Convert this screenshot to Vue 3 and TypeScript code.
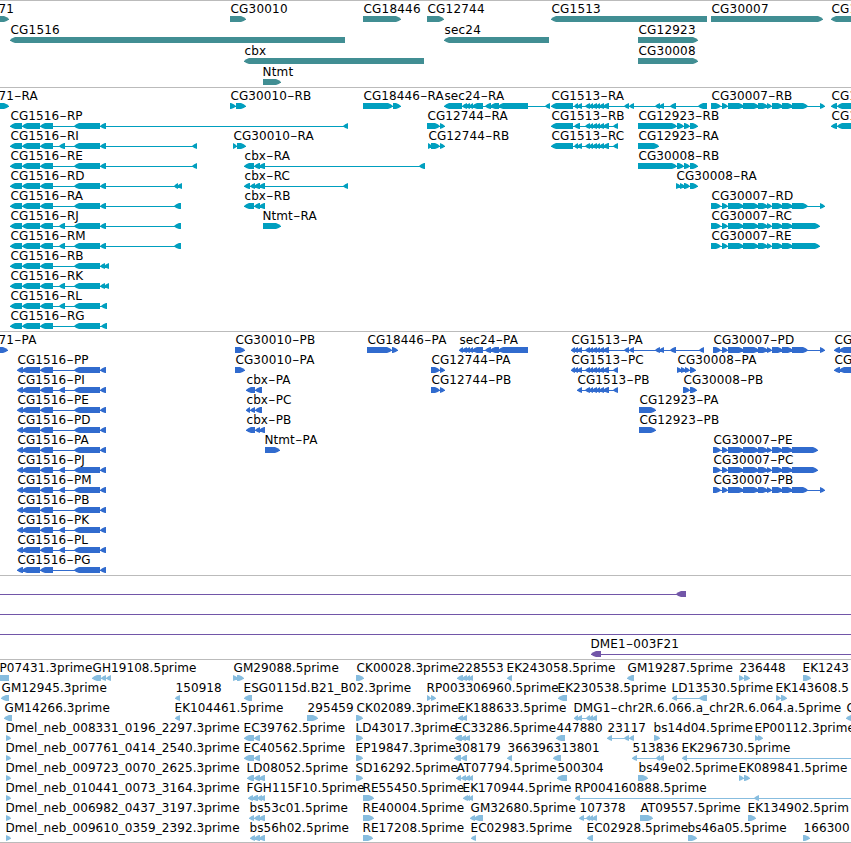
<template>
  <main class="browser">
    <section
      v-for="track in tracks"
      :key="track.name"
      class="track"
      :class="track.name"
    >
      <svg width="851" :height="track.height" :aria-label="track.name">
        <g
          v-for="(row, r) in track.rows"
          :key="r"
          :transform="`translate(0 ${r * track.pitch})`"
        >
          <g v-for="(f, i) in row" :key="i">
            <rect
              class="intron"
              :x="f.exons[0][0]"
              y="18"
              :width="(f.lineEnd ?? f.exons[f.exons.length - 1][1]) - f.exons[0][0]"
              height="1"
            />
            <path :d="exonPath(f)" />
            <text v-if="f.label" :x="f.x + 0.5" y="12">
              <template v-for="(part, p) in f.label.split('-')" :key="p"
                ><tspan v-if="p > 0" class="dash" dy="1.8">-</tspan
                ><tspan :dy="p > 0 ? -1.8 : 0">{{ part }}</tspan></template
              >
            </text>
          </g>
        </g>
      </svg>
    </section>
  </main>
</template>

<script setup lang="ts">
type Span = [number, number];
type Strand = "+" | "-" | "";

interface Feature {
  label: string;
  x: number;
  strand: Strand;
  exons: Span[];
  lineEnd?: number;
}

interface Track {
  name: string;
  height: number;
  pitch: number;
  rows: Feature[][];
}

function feat(
  label: string,
  x: number,
  strand: Strand,
  exons: Span[],
  lineEnd?: number
): Feature {
  return { label, x, strand, exons, lineEnd };
}

// each exon is a 6px bar that narrows to a rounded point on the strand side
function exonPath(f: Feature) {
  if (!f.strand) return "";
  return f.exons
    .map(([a, b]) => {
      const head = Math.min(5, b - a);
      const dir = f.strand === "+" ? 1 : -1;
      const tip = dir > 0 ? b : a;
      const base = dir > 0 ? a : b;
      const neck = tip - dir * head;
      const mid = tip - dir * head * 0.45;
      return `M${base} 15H${neck}L${mid} 16.2L${tip} 17.9V18.6L${mid} 20L${neck} 21H${base}Z`;
    })
    .join("");
}

const cg1513: Span[] = [
  [585, 590], [589, 593], [592, 597], [596, 600], [599, 604], [603, 609],
];
const cg1513Far: Span[] = [[624, 629], [629, 634], [655, 660], [659, 664], [670, 676]];
const sec24: Span[] = [[465, 470], [469, 473], [472, 483], [485, 491], [490, 499], [498, 528]];
const cg30007: Span[] = [
  [722, 728], [728, 744], [743, 759], [758, 768], [767, 772], [772, 783], [782, 793],
];
const cg30008: Span[] = [[638, 677], [677, 684], [684, 690], [690, 698]];

function cg1516(name: string, extra: boolean, tail: Span[]) {
  const exons: Span[] = [[10, 22], [22, 40], [40, 53]];
  if (extra) exons.push([59, 65]);
  exons.push([74, 100], ...tail);
  return feat(`CG1516-${name}`, 10, "-", exons);
}

function cg1516p(name: string, extra = false) {
  const exons: Span[] = [[17, 23], [22, 40], [40, 53]];
  if (extra) exons.push([59, 65]);
  exons.push([74, 100], [100, 106]);
  return feat(`CG1516-${name}`, 17, "-", exons);
}

function neb(id: string) {
  return feat(`Dmel_neb_${id}.3prime`, 5, "+", [[6, 11]]);
}

const tracks: Track[] = [
  {
    name: "genes",
    height: 86,
    pitch: 21,
    rows: [
      [
        feat("71", -2, "+", [[-10, 9]]),
        feat("CG30010", 230, "+", [[230, 246]]),
        feat("CG18446", 363, "+", [[363, 401]]),
        feat("CG12744", 427, "+", [[427, 444]]),
        feat("CG1513", 551, "-", [[551, 707]]),
        feat("CG30007", 711, "+", [[711, 823]]),
        feat("CG1", 831, "-", [[831, 860]]),
      ],
      [
        feat("CG1516", 10, "-", [[10, 345]]),
        feat("sec24", 444, "-", [[444, 549]]),
        feat("CG12923", 638, "+", [[638, 698]]),
      ],
      [
        feat("cbx", 244, "-", [[244, 424]]),
        feat("CG30008", 638, "+", [[638, 698]]),
      ],
      [feat("Ntmt", 262, "+", [[263, 281]])],
    ],
  },
  {
    name: "transcripts",
    height: 243,
    pitch: 20,
    rows: [
      [
        feat("71-RA", -2, "+", [[-10, 9]]),
        feat("CG30010-RB", 230, "+", [[230, 236], [236, 246]]),
        feat("CG18446-RA", 363, "+", [[363, 393], [393, 401]]),
        feat("sec24-RA", 444, "-", [[444, 462], [462, 467], ...sec24, [545, 550]]),
        feat("CG1513-RA", 551, "-", [[551, 573], [574, 578], [577, 582], ...cg1513, ...cg1513Far, [698, 707]]),
        feat("CG30007-RB", 711, "+", [[711, 721], ...cg30007, [792, 808], [820, 825]]),
        feat("CG1", 831, "-", [[831, 837], [837, 860]]),
      ],
      [
        cg1516("RP", false, [[100, 106], [343, 348]]),
        feat("CG12744-RA", 427, "+", [[427, 440], [440, 445]]),
        feat("CG1513-RB", 551, "-", [[551, 573], [574, 580], ...cg1513, [613, 618]]),
        feat("CG12923-RB", 638, "+", cg30008),
        feat("CG1", 831, "-", [[831, 837], [837, 860]]),
      ],
      [
        cg1516("RI", true, [[100, 106], [192, 197]]),
        feat("CG30010-RA", 233, "+", [[233, 237], [237, 246]]),
        feat("CG12744-RB", 428, "+", [[428, 432], [431, 440], [440, 445]]),
        feat("CG1513-RC", 551, "-", [[551, 573], [574, 578], [577, 582], ...cg1513, [613, 618]]),
        feat("CG12923-RA", 638, "+", [[638, 659]]),
      ],
      [
        cg1516("RE", false, [[100, 106], [192, 197]]),
        feat("cbx-RA", 244, "-", [[244, 254], [254, 260], [259, 265], [419, 425]]),
        feat("CG30008-RB", 638, "+", cg30008),
      ],
      [
        cg1516("RD", false, [[100, 106], [174, 178], [177, 182]]),
        feat("cbx-RC", 244, "-", [[244, 250], [250, 255], [254, 260], [259, 265], [343, 348]]),
        feat("CG30008-RA", 676, "+", [[676, 681], [680, 685], [684, 690], [690, 698]]),
      ],
      [
        cg1516("RA", false, [[100, 106], [174, 181]]),
        feat("cbx-RB", 244, "-", [[244, 254], [254, 260], [259, 265]]),
        feat("CG30007-RD", 711, "+", [[711, 721], ...cg30007, [792, 808], [820, 825]]),
      ],
      [
        cg1516("RJ", true, [[100, 106], [174, 181]]),
        feat("Ntmt-RA", 262, "+", [[263, 281]]),
        feat("CG30007-RC", 711, "+", [[711, 721], ...cg30007, [792, 820]]),
      ],
      [
        cg1516("RM", true, [[100, 106], [174, 181]]),
        feat("CG30007-RE", 711, "+", [[711, 721], ...cg30007, [792, 820]]),
      ],
      [cg1516("RB", false, [[100, 105], [104, 109]])],
      [cg1516("RK", true, [[100, 105], [104, 109]])],
      [cg1516("RL", true, [[101, 107]])],
      [cg1516("RG", false, [[101, 107]])],
    ],
  },
  {
    name: "proteins",
    height: 243,
    pitch: 20,
    rows: [
      [
        feat("71-PA", -2, "+", [[-10, 8]]),
        feat("CG30010-PB", 235, "+", [[235, 245]]),
        feat("CG18446-PA", 367, "+", [[367, 392], [392, 398]]),
        feat("sec24-PA", 459, "-", [[459, 463], [462, 467], ...sec24]),
        feat("CG1513-PA", 571, "-", [[571, 575], [574, 578], [577, 582], ...cg1513, ...cg1513Far, [699, 704]]),
        feat("CG30007-PD", 713, "+", [[713, 721], ...cg30007, [792, 808], [820, 825]]),
        feat("CG1", 834, "-", [[834, 840], [839, 860]]),
      ],
      [
        cg1516p("PP"),
        feat("CG30010-PA", 235, "+", [[235, 245]]),
        feat("CG12744-PA", 431, "+", [[431, 440], [440, 445]]),
        feat("CG1513-PC", 571, "-", [[571, 575], [574, 578], [577, 582], ...cg1513, [613, 618]]),
        feat("CG30008-PA", 677, "+", [[677, 682], [681, 686], [685, 690], [690, 696]]),
        feat("CG1", 834, "-", [[834, 840], [839, 860]]),
      ],
      [
        cg1516p("PI", true),
        feat("cbx-PA", 246, "-", [[246, 255], [255, 262]]),
        feat("CG12744-PB", 431, "+", [[431, 440], [440, 445]]),
        feat("CG1513-PB", 577, "-", [[577, 582], ...cg1513, [613, 618]]),
        feat("CG30008-PB", 683, "+", [[683, 690], [690, 697]]),
      ],
      [
        cg1516p("PE"),
        feat("cbx-PC", 246, "-", [[246, 250], [250, 255], [255, 262]]),
        feat("CG12923-PA", 639, "+", [[639, 656]]),
      ],
      [
        cg1516p("PD"),
        feat("cbx-PB", 246, "-", [[246, 255], [255, 260], [259, 265]]),
        feat("CG12923-PB", 639, "+", [[639, 656]]),
      ],
      [
        cg1516p("PA"),
        feat("Ntmt-PA", 264, "+", [[265, 280]]),
        feat("CG30007-PE", 713, "+", [[713, 721], ...cg30007, [792, 818]]),
      ],
      [
        cg1516p("PJ", true),
        feat("CG30007-PC", 713, "+", [[713, 721], ...cg30007, [792, 818]]),
      ],
      [
        cg1516p("PM", true),
        feat("CG30007-PB", 713, "+", [[713, 721], ...cg30007, [792, 808], [820, 825]]),
      ],
      [cg1516p("PB")],
      [cg1516p("PK", true)],
      [cg1516p("PL", true)],
      [cg1516p("PG")],
    ],
  },
  {
    name: "insertions",
    height: 83,
    pitch: 20,
    rows: [
      [
        feat("", 0, "", [[0, 676]]),
        feat("", 0, "-", [[676, 686]]),
      ],
      [feat("", 0, "", [[0, 851]])],
      [feat("", 0, "", [[0, 851]])],
      [feat("DME1-003F21", 590, "-", [[591, 601]], 851)],
    ],
  },
  {
    name: "ests",
    height: 182,
    pitch: 20,
    rows: [
      [
        feat("P07431.3prime", -1, "-", [[-5, 9]]),
        feat("GH19108.5prime", 92, "-", [[92, 101], [101, 106], [106, 111]]),
        feat("GM29088.5prime", 233, "+", [[233, 238], [237, 244]]),
        feat("CK00028.3prime", 356, "+", [[356, 364]]),
        feat("228553", 457, "-", [[457, 463], [462, 467], [466, 470], [469, 473]]),
        feat("EK243058.5prime", 506, "-", [[507, 512]]),
        feat("GM19287.5prime", 627, "-", [[627, 634]]),
        feat("236448", 739, "+", [[739, 744], [744, 750]]),
        feat("EK1243", 802, "+", [[803, 811]]),
      ],
      [
        feat("GM12945.3prime", 1, "-", [[1, 9]]),
        feat("150918", 175, "-", [[175, 180]]),
        feat("ESG0115d.B21_B02.3prime", 243, "-", [[244, 252]]),
        feat("RP003306960.5prime", 426, "+", [[427, 431], [431, 436]]),
        feat("EK230538.5prime", 557, "-", [[558, 567]]),
        feat("LD13530.5prime", 671, "-", [[672, 677], [699, 707]]),
        feat("EK143608.5", 775, "+", [[776, 781], [781, 787]]),
      ],
      [
        feat("GM14266.3prime", 4, "-", [[4, 12]]),
        feat("EK104461.5prime", 174, "-", [[175, 180]]),
        feat("295459", 307, "+", [[307, 318]]),
        feat("CK02089.3prime", 356, "+", [[356, 363]]),
        feat("EK188633.5prime", 457, "-", [[458, 463], [462, 467]]),
        feat("DMG1-chr2R.6.066.a_chr2R.6.064.a.5prime", 573, "-", [[574, 578], [577, 582], [586, 590], [589, 593], [592, 597]]),
        feat("C", 846, "-", [[846, 860]]),
      ],
      [
        neb("008331_0196_2297"),
        feat("EC39762.5prime", 243, "-", [[244, 254], [254, 260]]),
        feat("LD43017.3prime", 355, "+", [[356, 363]]),
        feat("EC33286.5prime", 454, "-", [[455, 462], [461, 466], [465, 470]]),
        feat("447880", 556, "-", [[556, 565]]),
        feat("23117", 607, "-", [[607, 612], [624, 629], [629, 634]]),
        feat("bs14d04.5prime", 653, "+", [[654, 660]]),
        feat("EP00112.3prime", 754, "+", [[755, 759], [758, 763]]),
      ],
      [
        neb("007761_0414_2540"),
        feat("EC40562.5prime", 243, "-", [[244, 254], [254, 260]]),
        feat("EP19847.3prime", 355, "+", [[356, 363]]),
        feat("308179", 454, "-", [[454, 461], [461, 467]]),
        feat("366396", 507, "-", [[507, 512]]),
        feat("313801", 553, "-", [[553, 561]]),
        feat("513836", 632, "-", [[632, 637], [656, 660], [659, 664]]),
        feat("EK296730.5prime", 681, "-", [[682, 687]], 851),
      ],
      [
        neb("009723_0070_2625"),
        feat("LD08052.5prime", 246, "-", [[247, 254], [254, 260], [259, 265]]),
        feat("SD16292.5prime", 355, "+", [[356, 363]]),
        feat("AT07794.5prime", 456, "-", [[456, 461], [461, 466], [465, 470], [469, 473]]),
        feat("500304", 557, "-", [[557, 567]]),
        feat("bs49e02.5prime", 638, "+", [[638, 648]]),
        feat("EK089841.5prime", 738, "+", [[739, 744], [744, 750]]),
      ],
      [
        neb("010441_0073_3164"),
        feat("FGH115F10.5prime", 246, "-", [[248, 253], [252, 258], [257, 262], [260, 265]]),
        feat("RE55450.5prime", 362, "+", [[363, 374]]),
        feat("EK170944.5prime", 462, "-", [[463, 468], [466, 470], [469, 473]]),
        feat("RP004160888.5prime", 574, "-", [[575, 580], [754, 759]], 851),
      ],
      [
        neb("006982_0437_3197"),
        feat("bs53c01.5prime", 249, "-", [[249, 254], [254, 260], [259, 265]]),
        feat("RE40004.5prime", 362, "+", [[363, 374]]),
        feat("GM32680.5prime", 470, "-", [[470, 475], [474, 483]]),
        feat("107378", 579, "-", [[579, 584], [586, 590], [589, 593], [592, 597]]),
        feat("AT09557.5prime", 640, "+", [[640, 653]]),
        feat("EK134902.5prim", 747, "+", [[748, 756]]),
      ],
      [
        neb("009610_0359_2392"),
        feat("bs56h02.5prime", 249, "-", [[250, 255], [254, 260], [259, 265]]),
        feat("RE17208.5prime", 362, "+", [[363, 373]]),
        feat("EC02983.5prime", 470, "-", [[471, 476]]),
        feat("EC02928.5prime", 586, "-", [[587, 593]]),
        feat("bs46a05.5prime", 687, "+", [[688, 697]]),
        feat("166300", 803, "+", [[803, 810]]),
      ],
    ],
  },
];
</script>

<style>
body {
  margin: 0;
  background: #fff;
}
</style>

<style scoped>
.browser {
  width: 851px;
  height: 843px;
  overflow: hidden;
  background: #fff;
  font-family: "DejaVu Sans", sans-serif;
  font-size: 12px;
  color: #000;
}
.track {
  border-top: 1px solid #bbb;
}
.track:last-child {
  border-bottom: 1px solid #bbb;
}
.track svg {
  display: block;
  fill: currentColor;
}
.intron {
  shape-rendering: crispEdges;
}
text {
  fill: #000;
  letter-spacing: 0.08px;
}
.dash {
  font-size: 21px;
  font-weight: 200;
}
.genes {
  color: #418e93;
}
.genes text {
  letter-spacing: 0.2px;
}
.transcripts {
  color: #009fbf;
}
.proteins {
  color: #316bce;
}
.insertions {
  color: #7256a8;
}
.ests {
  color: #87bddf;
}
</style>
